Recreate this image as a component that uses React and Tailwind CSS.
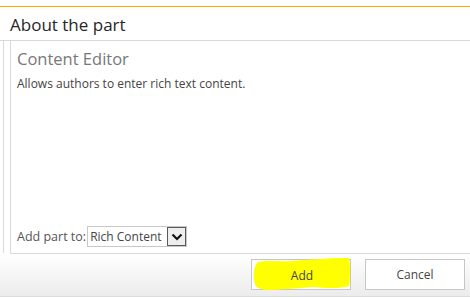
const Chevron = () => (
  <svg width="12" height="8" viewBox="0 0 12 8">
    <path d="M1.5 1.5 L6 6 L10.5 1.5" fill="none" stroke="#111" strokeWidth="2.2" />
  </svg>
);

const Scribble = () => (
  <svg
    className="absolute left-[250px] top-[255px] pointer-events-none"
    width="105"
    height="40"
    viewBox="0 0 105 40"
  >
    <path
      d="M8 7 C18 5 30 7 42 6 C58 5 74 3 99 3 L100 12 C100 20 100 26 99 31 C90 34 76 33 62 32 C48 33 30 35 16 35 C8 34 5 32 4 26 C3 18 4 11 8 7 Z"
      fill="#ffff00"
    />
  </svg>
);

const App = () => {
  return (
    <div
      className="relative w-[470px] h-[297px] bg-white overflow-hidden flex flex-col text-[#444]"
      style={{ fontFamily: '"Open Sans", "Noto Sans", sans-serif' }}
    >
      {/* orange top rule */}
      <div className="h-[6px] shrink-0" />
      <div className="h-px bg-[#ffa500] shrink-0" />

      {/* title */}
      <div className="h-[34px] shrink-0 border-b border-[#d9d9d9] px-[10px] flex items-end pb-[7px]">
        <h1 className="text-[17px] leading-none text-[#262626]">About the part</h1>
      </div>

      {/* body */}
      <div className="h-[213px] shrink-0 flex">
        <div className="w-[4px] border-r border-[#d9d9d9] mb-[1px]" />
        <div className="flex-1 ml-[6px] border-l border-b border-[#d9d9d9] pl-[6px] pt-[8px] pb-[6px] flex flex-col">
          <div className="text-[16.5px] leading-[20px] text-[#777]">Content Editor</div>
          <div className="mt-[7px] text-[12px] leading-[15px] text-[#444]">
            Allows authors to enter rich text content.
          </div>
          <div className="flex-1" />
          <div className="flex items-center">
            <span className="text-[12.5px] leading-[15px] text-[#555] whitespace-nowrap">Add part to:</span>
            <div className="ml-[1px] w-[100px] h-[21px] border border-[#c8c8c8] flex items-center">
              <span className="flex-1 pl-[2px] text-[12px] leading-[15px] text-[#444] whitespace-nowrap">
                Rich Content
              </span>
              <div className="w-[19px] h-[19px] shrink-0 border border-[#5a5a5a] bg-[#eeeeee] flex items-center justify-center">
                <Chevron />
              </div>
            </div>
          </div>
        </div>
      </div>

      {/* footer */}
      <div className="flex-1 bg-gradient-to-b from-white to-[#ececec] border-b border-[#dcdcdc] flex justify-end items-start pt-[5px] pr-[5px] gap-[14px]">
        <button className="w-[100px] h-[31px] border border-[#c6c6c6] bg-white text-[12px] text-[#444]">
          Add
        </button>
        <button className="w-[100px] h-[31px] border border-[#c6c6c6] bg-white text-[12px] text-[#444]">
          Cancel
        </button>
      </div>

      <Scribble />
      <span className="absolute left-[252px] top-[260px] w-[100px] h-[31px] flex items-center justify-center text-[12px] text-[#444] pointer-events-none">
        Add
      </span>
    </div>
  );
};

export default App;
